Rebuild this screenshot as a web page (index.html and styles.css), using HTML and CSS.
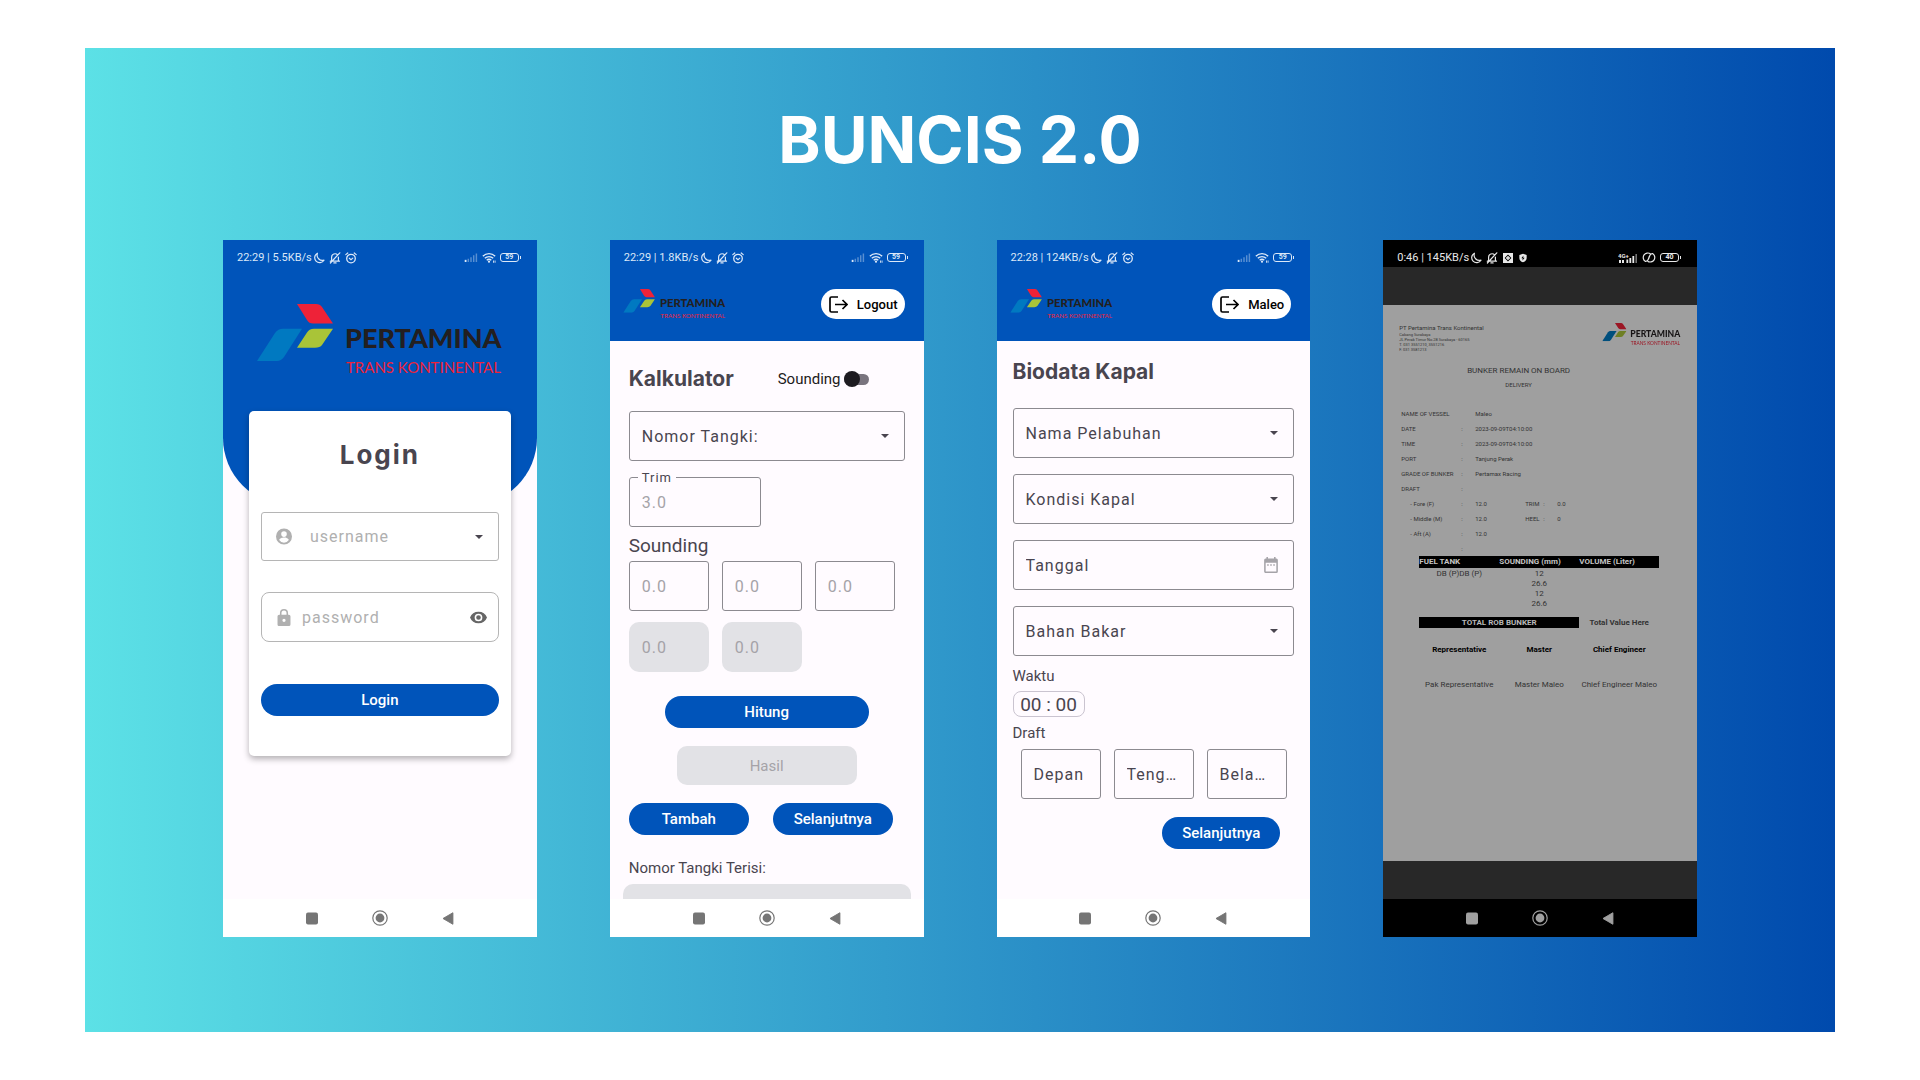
FILE: index.html
```html
<!DOCTYPE html>
<html lang="id">
<head>
<meta charset="utf-8">
<meta name="viewport" content="width=device-width, initial-scale=1">
<title>BUNCIS 2.0</title>
<link rel="stylesheet" href="styles.css">
</head>
<body>
<svg class="sprite" aria-hidden="true">
  <symbol id="moon" viewBox="0 0 12 12"><path d="M4.400 1.200A5 5 0 1 0 11 8.200 5.400 5.400 0 0 1 4.400 1.200Z" fill="none" stroke="currentColor" stroke-width="1.200" stroke-linejoin="round"/></symbol>
  <symbol id="bell-off" viewBox="0 0 12 12"><path d="M1.3 9.2h9.2M2.6 9V5.2A3.4 3.4 0 0 1 8.6 3M9.4 5v4M4.9 10.9h2.2M10.8.8 1.4 11" fill="none" stroke="currentColor" stroke-width="1.2" stroke-linecap="round"/></symbol>
  <symbol id="alarm" viewBox="0 0 12 12"><circle cx="6" cy="6.6" r="4.3" fill="none" stroke="currentColor" stroke-width="1.3"/><path d="M4.3 6.2 6 7.6l1.8-1.5M.8 2.6 2.8 1M11.2 2.6 9.2 1" fill="none" stroke="currentColor" stroke-width="1.2" stroke-linecap="round"/></symbol>
  <symbol id="signal" viewBox="0 0 14 10"><path d="M0 7.6h2V10H0z" fill="currentColor"/><path d="M3.2 6.4h1.6V10H3.2zM6.2 4.6h1.6V10H6.2zM9.2 2.6h1.6V10H9.2zM12.2.6h1.6V10h-1.6z" fill="currentColor" opacity=".4"/></symbol>
  <symbol id="wifi" viewBox="0 0 14 11"><path d="M.9 4.2a8.6 8.6 0 0 1 12.2 0M2.8 6.3a6 6 0 0 1 8.4 0M4.7 8.3a3.3 3.3 0 0 1 4.6 0" fill="none" stroke="currentColor" stroke-width="1.4"/><circle cx="7" cy="9.7" r="1.1" fill="currentColor"/><path d="M11 8.4h.9v2.4H11zM12.6 8.4h.9v2.4h-.9z" fill="currentColor"/></symbol>
  <symbol id="link" viewBox="0 0 14 11"><path d="M8.400 1.800A4.300 4.300 0 1 0 3.200 9.300C5 9.600 6 8.400 6.400 7L7.400 4.200M5.600 9.200A4.300 4.300 0 1 0 10.800 1.700C9 1.400 8 2.600 7.600 4L6.600 6.800" fill="none" stroke="currentColor" stroke-width="1.200"/></symbol>
  <symbol id="diamond" viewBox="0 0 12 12"><path fill-rule="evenodd" d="M1 1h10v10H1zM6 2.600 2.600 6 6 9.400 9.400 6Z" fill="currentColor"/><path d="M6 4v4M4 6h4" stroke="currentColor" stroke-width="1.400"/></symbol>
  <symbol id="shield" viewBox="0 0 10 12"><path fill-rule="evenodd" d="M5 .8 9.400 2.300V6c0 2.600-1.800 4.300-4.400 5.200C2.400 10.300.6 8.600.6 6V2.300ZM5.600 3 3 6.400h1.700L4.300 9 7 5.600H5.200Z" fill="currentColor"/></symbol>
  <symbol id="caret" viewBox="0 0 8 4"><path d="M0 0h8L4 4z" fill="currentColor"/></symbol>
  <symbol id="user" viewBox="2 2 20 20"><path d="M12 2a10 10 0 1 0 0 20 10 10 0 0 0 0-20zm0 3.500a3.500 3.500 0 1 1 0 7 3.500 3.500 0 0 1 0-7zm0 14.200a7.200 7.200 0 0 1-6-3.220c.03-1.990 4-3.080 6-3.080s5.970 1.090 6 3.080a7.200 7.200 0 0 1-6 3.220z" fill="currentColor"/></symbol>
  <symbol id="lock" viewBox="4 1 16 21"><path d="M18 8h-1V6A5 5 0 0 0 7 6v2H6a2 2 0 0 0-2 2v10c0 1.100.9 2 2 2h12a2 2 0 0 0 2-2V10a2 2 0 0 0-2-2zm-6 9a2 2 0 1 1 0-4 2 2 0 0 1 0 4zm3.100-9H8.900V6a3.100 3.100 0 0 1 6.200 0z" fill="currentColor"/></symbol>
  <symbol id="eye" viewBox="1 4 22 16"><path d="M12 4.500A11.800 11.800 0 0 0 1 12a11.800 11.800 0 0 0 22 0A11.800 11.800 0 0 0 12 4.500zM12 17a5 5 0 1 1 0-10 5 5 0 0 1 0 10zm0-8a3 3 0 1 0 0 6 3 3 0 0 0 0-6z" fill="currentColor"/></symbol>
  <symbol id="exit" viewBox="0 0 19 17"><path d="M9 1H2.500A1.500 1.500 0 0 0 1 2.500v12A1.500 1.500 0 0 0 2.500 16H9M6 8.500h12M13.500 4l4.500 4.500-4.500 4.500" fill="none" stroke="currentColor" stroke-width="1.700"/></symbol>
  <symbol id="calendar" viewBox="3 1 18 21"><path d="M19 3h-1V1h-2v2H8V1H6v2H5a2 2 0 0 0-2 2v15c0 1.100.9 2 2 2h14a2 2 0 0 0 2-2V5a2 2 0 0 0-2-2zm0 17H5V8.500h14zM7 10.500h2v2H7zm4 0h2v2h-2zm4 0h2v2h-2z" fill="currentColor"/></symbol>
  <symbol id="nav-square" viewBox="0 0 12 12"><rect width="12" height="12" rx="2" fill="currentColor"/></symbol>
  <symbol id="nav-home" viewBox="0 0 16 16"><circle cx="8" cy="8" r="7.200" fill="none" stroke="currentColor" stroke-width="1.200"/><circle cx="8" cy="8" r="4.400" fill="currentColor"/></symbol>
  <symbol id="nav-back" viewBox="0 0 12 14"><path d="M11.300.8v12.400L.6 7z" fill="currentColor" stroke="currentColor" stroke-linejoin="round"/></symbol>
  <symbol id="mark" viewBox="0 0 76 57"><path d="M40 0H59Q63 0 65 3L76 19.500H56Q52 19.500 50 16Z" fill="#ee2238"/><path d="M0 57 18 29Q21 24.700 26 24.700H45L27 53Q24 57 20 57Z" fill="#0079c1"/><path d="M40 43.700 50 28.500Q52 24.700 57 24.700H76L65 41Q63 43.700 58 43.700Z" fill="#a9c438"/></symbol>
</svg>

<main class="stage">
  <div class="panel">
    <h1 class="headline">BUNCIS 2.0</h1>
    <div class="phones">

      <section class="phone" aria-label="Login">
        <header class="hero">
          <div class="status">
            <span>22:29 | 5.5KB/s</span>
            <svg class="ico-12"><use href="#moon"/></svg><svg class="ico-12"><use href="#bell-off"/></svg><svg class="ico-12"><use href="#alarm"/></svg>
            <span class="spacer"></span>
            <svg class="ico-signal"><use href="#signal"/></svg><svg class="ico-wifi"><use href="#wifi"/></svg><span class="battery">59</span>
          </div>
          <svg class="logo logo-large" viewBox="0 0 246 72" role="img" aria-label="Pertamina Trans Kontinental">
            <use href="#mark" width="76" height="57"/>
            <text class="logo-name" x="88" y="44">PERTAMINA</text>
            <text class="logo-unit" x="89" y="69">TRANS KONTINENTAL</text>
          </svg>
        </header>
        <form class="card">
          <h2 class="card-title">Login</h2>
          <div class="entry entry-user">
            <svg class="entry-icon"><use href="#user"/></svg>
            <select aria-label="username"><option>username</option></select>
            <svg class="caret"><use href="#caret"/></svg>
          </div>
          <div class="entry entry-pass">
            <svg class="entry-icon"><use href="#lock"/></svg>
            <input type="password" placeholder="password" aria-label="password">
            <svg class="eye"><use href="#eye"/></svg>
          </div>
          <button class="btn" type="button">Login</button>
        </form>
        <nav class="navbar"><svg class="nav-side"><use href="#nav-square"/></svg><svg class="nav-mid"><use href="#nav-home"/></svg><svg class="nav-side"><use href="#nav-back"/></svg></nav>
      </section>

      <section class="phone" aria-label="Kalkulator">
        <header class="appbar">
          <div class="status">
            <span>22:29 | 1.8KB/s</span>
            <svg class="ico-12"><use href="#moon"/></svg><svg class="ico-12"><use href="#bell-off"/></svg><svg class="ico-12"><use href="#alarm"/></svg>
            <span class="spacer"></span>
            <svg class="ico-signal"><use href="#signal"/></svg><svg class="ico-wifi"><use href="#wifi"/></svg><span class="battery">59</span>
          </div>
          <div class="appbar-row">
            <svg class="logo logo-small" viewBox="0 0 246 72" role="img" aria-label="Pertamina Trans Kontinental">
              <use href="#mark" width="76" height="57"/>
              <text class="logo-name" x="88" y="44">PERTAMINA</text>
              <text class="logo-unit" x="89" y="69">TRANS KONTINENTAL</text>
            </svg>
            <button class="pill" type="button"><svg><use href="#exit"/></svg>Logout</button>
          </div>
        </header>
        <form class="calc">
          <div class="calc-head">
            <h2 class="title">Kalkulator</h2>
            <label class="toggle">Sounding<input type="checkbox" role="switch"></label>
          </div>
          <div class="field">
            <select aria-label="Nomor Tangki"><option>Nomor Tangki:</option></select>
            <svg class="caret"><use href="#caret"/></svg>
          </div>
          <div class="field trim">
            <label for="trim">Trim</label>
            <input id="trim" type="text" placeholder="3.0">
          </div>
          <h3 class="subtitle">Sounding</h3>
          <div class="triple">
            <input class="field" type="text" placeholder="0.0" aria-label="Sounding 1">
            <input class="field" type="text" placeholder="0.0" aria-label="Sounding 2">
            <input class="field" type="text" placeholder="0.0" aria-label="Sounding 3">
            <input class="field" type="text" placeholder="0.0" aria-label="Rata-rata 1" disabled>
            <input class="field" type="text" placeholder="0.0" aria-label="Rata-rata 2" disabled>
          </div>
          <button class="btn btn-count" type="button">Hitung</button>
          <input class="result" type="text" placeholder="Hasil" aria-label="Hasil" disabled>
          <div class="pair">
            <button class="btn" type="button">Tambah</button>
            <button class="btn" type="button">Selanjutnya</button>
          </div>
          <p class="caption">Nomor Tangki Terisi:</p>
          <div class="filled"></div>
        </form>
        <nav class="navbar"><svg class="nav-side"><use href="#nav-square"/></svg><svg class="nav-mid"><use href="#nav-home"/></svg><svg class="nav-side"><use href="#nav-back"/></svg></nav>
      </section>

      <section class="phone" aria-label="Biodata Kapal">
        <header class="appbar">
          <div class="status">
            <span>22:28 | 124KB/s</span>
            <svg class="ico-12"><use href="#moon"/></svg><svg class="ico-12"><use href="#bell-off"/></svg><svg class="ico-12"><use href="#alarm"/></svg>
            <span class="spacer"></span>
            <svg class="ico-signal"><use href="#signal"/></svg><svg class="ico-wifi"><use href="#wifi"/></svg><span class="battery">59</span>
          </div>
          <div class="appbar-row">
            <svg class="logo logo-small" viewBox="0 0 246 72" role="img" aria-label="Pertamina Trans Kontinental">
              <use href="#mark" width="76" height="57"/>
              <text class="logo-name" x="88" y="44">PERTAMINA</text>
              <text class="logo-unit" x="89" y="69">TRANS KONTINENTAL</text>
            </svg>
            <button class="pill" type="button"><svg><use href="#exit"/></svg>Maleo</button>
          </div>
        </header>
        <form class="bio">
          <h2 class="title">Biodata Kapal</h2>
          <div class="stack">
            <div class="field"><select aria-label="Nama Pelabuhan"><option>Nama Pelabuhan</option></select><svg class="caret"><use href="#caret"/></svg></div>
            <div class="field"><select aria-label="Kondisi Kapal"><option>Kondisi Kapal</option></select><svg class="caret"><use href="#caret"/></svg></div>
            <div class="field"><input type="text" placeholder="Tanggal" aria-label="Tanggal"><svg class="calendar"><use href="#calendar"/></svg></div>
            <div class="field"><select aria-label="Bahan Bakar"><option>Bahan Bakar</option></select><svg class="caret"><use href="#caret"/></svg></div>
          </div>
          <label class="caption" for="time">Waktu</label>
          <input class="time" id="time" type="text" value="00 : 00">
          <p class="caption">Draft</p>
          <div class="triple triple-draft">
            <input class="field" type="text" placeholder="Depan" aria-label="Draft depan">
            <input class="field" type="text" placeholder="Teng…" aria-label="Draft tengah">
            <input class="field" type="text" placeholder="Bela…" aria-label="Draft belakang">
          </div>
          <button class="btn btn-next" type="button">Selanjutnya</button>
        </form>
        <nav class="navbar"><svg class="nav-side"><use href="#nav-square"/></svg><svg class="nav-mid"><use href="#nav-home"/></svg><svg class="nav-side"><use href="#nav-back"/></svg></nav>
      </section>

      <section class="phone phone-dark" aria-label="Bunker Remain On Board">
        <div class="status">
          <span>0:46 | 145KB/s</span>
          <svg class="ico-12"><use href="#moon"/></svg><svg class="ico-12"><use href="#bell-off"/></svg><svg class="ico-12"><use href="#diamond"/></svg><svg class="ico-shield"><use href="#shield"/></svg>
          <span class="spacer"></span>
          <svg class="ico-4g" viewBox="0 0 20 12"><text x="0" y="6" font-size="6" font-weight="700" fill="currentColor">4G+</text><path d="M1 8h2v3H1zM4 8h2v3H4zM8.400 7.400h1.800V11H8.400zM11.400 6h1.800v5h-1.800zM14.400 4h1.800v7h-1.800z" fill="currentColor"/><path d="M17.400 2H19v9h-1.600z" fill="currentColor" opacity=".5"/></svg>
          <svg class="ico-wifi"><use href="#link"/></svg><span class="battery">40</span>
        </div>
        <article class="doc">
          <header class="doc-head">
            <div>
              <p class="company">PT Pertamina Trans Kontinental</p>
              <address class="address">Cabang Surabaya<br>JL Perak Timur No.28 Surabaya - 60165<br>T. 031 3551210, 3551216<br>F. 031 3581213</address>
            </div>
            <svg class="logo logo-doc" viewBox="0 0 246 72" role="img" aria-label="Pertamina Trans Kontinental">
              <use href="#mark" width="76" height="57"/>
              <text class="logo-name" x="88" y="44">PERTAMINA</text>
              <text class="logo-unit" x="89" y="69">TRANS KONTINENTAL</text>
            </svg>
          </header>
          <div class="doc-title">
            <h2>BUNKER REMAIN ON BOARD</h2>
            <p>DELIVERY</p>
          </div>
          <table class="info">
            <colgroup><col class="c-label"><col class="c-colon"><col class="c-value"><col class="c-trim"><col class="c-colon"><col></colgroup>
            <tr><th>NAME OF VESSEL</th><td></td><td colspan="4">Maleo</td></tr>
            <tr><th>DATE</th><td>:</td><td colspan="4">2023-09-09T04:10:00</td></tr>
            <tr><th>TIME</th><td>:</td><td colspan="4">2023-09-09T04:10:00</td></tr>
            <tr><th>PORT</th><td>:</td><td colspan="4">Tanjung Perak</td></tr>
            <tr><th>GRADE OF BUNKER</th><td>:</td><td colspan="4">Pertamax Racing</td></tr>
            <tr><th>DRAFT</th><td>:</td><td colspan="4"></td></tr>
            <tr><th class="sub">- Fore (F)</th><td>:</td><td>12.0</td><td>TRIM</td><td>:</td><td>0.0</td></tr>
            <tr><th class="sub">- Middle (M)</th><td>:</td><td>12.0</td><td>HEEL</td><td>:</td><td>0</td></tr>
            <tr><th class="sub">- Aft (A)</th><td>:</td><td>12.0</td><td></td><td></td><td></td></tr>
            <tr><th></th><td>:</td><td></td><td></td><td></td><td></td></tr>
          </table>
          <table class="fuel">
            <thead><tr><th>FUEL TANK</th><th>SOUNDING (mm)</th><th>VOLUME (Liter)</th></tr></thead>
            <tbody>
              <tr class="fuel-row"><td>DB (P)DB (P)</td><td>12<br>26.6<br>12<br>26.6</td><td></td></tr>
              <tr class="fuel-total"><th colspan="2">TOTAL ROB BUNKER</th><td>Total Value Here</td></tr>
              <tr class="fuel-roles"><th>Representative</th><th>Master</th><th>Chief Engineer</th></tr>
              <tr><td>Pak Representative</td><td>Master Maleo</td><td>Chief Engineer Maleo</td></tr>
            </tbody>
          </table>
        </article>
        <nav class="navbar"><svg class="nav-side"><use href="#nav-square"/></svg><svg class="nav-mid"><use href="#nav-home"/></svg><svg class="nav-side"><use href="#nav-back"/></svg></nav>
      </section>

    </div>
  </div>
</main>
</body>
</html>
```
FILE: styles.css
```css
*, *::before { box-sizing: border-box; }
h1, h2, h3, p { margin: 0; }
body { margin: 0; background: #fff; color: #49454f; font-family: Roboto, "Liberation Sans", sans-serif; }
button, input, select { font: inherit; letter-spacing: inherit; color: inherit; margin: 0; padding: 0; border: 0; background: none; min-width: 0; }
select { appearance: none; flex: 1; }
svg { display: block; flex: none; }
.sprite { position: absolute; width: 0; height: 0; }

.stage { padding: 48px 85px; }
.panel { min-height: calc(100vh - 96px); padding: 52px 138px 94px; background: linear-gradient(90deg, #5ce1e6, #004aad); }
.headline { margin-bottom: 60px; color: #fff; font: 700 64px/80px Inter, sans-serif; text-align: center; }
.phones { display: grid; grid-template-columns: repeat(4, minmax(0, 1fr)); gap: 73px; }
.phone { display: flex; flex-direction: column; aspect-ratio: 9 / 20; background: #fffbff; }

/* Status bar */
.status { display: flex; align-items: center; gap: 4px; padding: 9px 18px 1px 14px; color: #dbe8f8; font-size: 11px; line-height: 17px; white-space: nowrap; }
.status > span:first-child { margin-right: -3px; }
.spacer { flex: 1; }
.ico-12 { width: 12px; height: 12px; }
.ico-shield { width: 10px; height: 10px; }
.ico-signal { width: 14px; height: 9px; }
.ico-4g { width: 20px; height: 12px; }
.ico-wifi { width: 14px; height: 11px; }
.battery { position: relative; width: 19px; height: 9px; border: 1px solid; border-radius: 3px; font-size: 7px; font-weight: 700; line-height: 7px; text-align: center; }
.battery::after { content: ""; position: absolute; top: 2px; right: -3px; width: 1px; height: 3px; background: currentColor; }

/* Logo */
.logo { overflow: visible; }
.logo-large { width: 246px; height: 72px; }
.logo-small { width: 103px; height: 30px; }
.logo-doc { width: 79px; height: 23px; filter: brightness(.65); }
.logo-name { font: 900 27px Lato, sans-serif; fill: #231f20; }
.logo-unit { font: 400 15px Lato, sans-serif; fill: #ee2238; }

/* Login */
.hero { display: flex; flex-direction: column; height: 265px; border-radius: 0 0 67px 67px; background: #0054ba; }
.hero .logo { align-self: center; margin-top: 37px; }
.card { display: flex; flex-direction: column; margin: -94px 26px 0; padding: 26px 12px 40px; border-radius: 5px; background: #fff; box-shadow: 0 3px 6px rgba(0, 0, 0, .3); }
.card-title { margin-bottom: 39px; font: 700 26px/36px Inter, sans-serif; letter-spacing: 2px; text-align: center; }
.entry { display: flex; align-items: center; padding: 0 11px 0 14px; border: 1px solid #b5b5b5; color: #b0b0b0; font-size: 16px; letter-spacing: 1px; }
.entry input { flex: 1; }
.entry input::placeholder { color: #b0b0b0; }
.entry-user { gap: 18px; height: 49px; margin-bottom: 31px; padding-right: 15px; border-radius: 3px; }
.entry-pass { gap: 10px; height: 50px; margin-bottom: 42px; border-radius: 8px; }
.entry-icon { width: 16px; height: 17px; }
.caret { width: 8px; height: 4px; color: #49454f; }
.eye { width: 17px; height: 13px; color: #666; }

.btn { height: 32px; border-radius: 16px; background: #0054ba; color: #fff; font-size: 15px; font-weight: 500; }

/* App bar */
.appbar { height: 101px; background: #0054ba; }
.appbar-row { display: flex; align-items: center; justify-content: space-between; margin-top: 22px; padding: 0 19px 0 13px; }
.pill { display: flex; align-items: center; gap: 9px; height: 30px; padding: 0 7px 0 8px; border-radius: 15px; background: #fff; color: #000; font-size: 13px; font-weight: 500; }
.pill svg { width: 19px; height: 17px; }

/* Shared form parts */
.title { font: 700 21px/30px Inter, sans-serif; }
.field { display: flex; align-items: center; height: 50px; padding: 0 15px 0 12px; border: 1px solid #8c8a90; border-radius: 3px; font-size: 16px; letter-spacing: 1px; }
.field input { flex: 1; }
.bio ::placeholder { color: #49454f; opacity: 1; }
.calc ::placeholder { color: #a5a3a8; opacity: 1; }
.triple { display: grid; grid-template-columns: repeat(3, 80px); gap: 11px 13px; }
.triple .field { width: 80px; padding-right: 4px; }
.triple .field:disabled { border: 0; padding-left: 13px; border-radius: 10px; background: #e2e2e6; }
.caption { font-size: 15px; line-height: 20px; }

/* Kalkulator */
.calc { display: flex; flex: 1; flex-direction: column; padding: 23px 19px 0; }
.calc-head { display: flex; align-items: center; justify-content: space-between; margin-bottom: 17px; padding-right: 36px; }
.toggle { display: flex; align-items: center; gap: 3px; color: #1d1b20; font-size: 15px; }
.toggle input { position: relative; appearance: none; width: 25px; height: 11px; border-radius: 6px; background: #79747e; }
.toggle input::before { content: ""; position: absolute; top: -3px; left: 0; width: 16px; height: 16px; border-radius: 50%; background: #1d1b20; }
.trim { position: relative; width: 132px; margin-top: 16px; }
.trim label { position: absolute; top: -8px; left: 8px; padding: 0 4px; background: #fffbff; font-size: 13px; line-height: 16px; }
.subtitle { margin: 7px 0 3px; font-size: 19px; font-weight: 400; line-height: 24px; }
.btn-count { align-self: center; width: 204px; margin: 24px 0 18px; }
.result { align-self: center; width: 180px; height: 39px; border-radius: 10px; background: #e2e2e6; font-size: 15px; text-align: center; }
.pair { display: grid; grid-template-columns: 120px 120px; gap: 24px; margin: 18px 0 23px; }
.filled { flex: 1; min-height: 15px; margin: 6px -6px 0; border-radius: 10px 10px 0 0; background: #e2e2e6; }

/* Biodata */
.bio { display: flex; flex: 1; flex-direction: column; align-items: flex-start; padding: 16px 16px 0; }
.stack { display: grid; gap: 16px; width: 100%; margin: 21px 0 10px; }
.calendar { width: 14px; height: 16px; color: #a5a3a8; }
.time { width: 72px; height: 26px; margin: 5px 0 6px; border: 1px solid #cac4d0; border-radius: 8px; font-size: 19px; text-align: center; }
.triple-draft { margin: 6px 0 18px 8px; }
.btn-next { align-self: flex-end; width: 118px; margin-right: 14px; }

/* Navigation bar */
.navbar { display: flex; align-items: center; justify-content: center; gap: 54px; height: 38px; margin-top: auto; background: #fff; color: #757575; }
.nav-side { width: 12px; height: 13px; }
.nav-mid { width: 16px; height: 16px; }

/* Document preview */
.phone-dark { background: #282828; }
.phone-dark .status { background: #000; color: #e8e8e8; }
.phone-dark .navbar { margin-top: 38px; background: #000; color: #a0a0a0; }
.doc { flex: 1; margin-top: 38px; padding: 18px 16px 0; background: #9f9f9f; color: #333; font-size: 6px; }
.doc-head { display: flex; justify-content: space-between; }
.company { line-height: 9px; }
.address { font-size: 4px; font-style: normal; line-height: 5px; }
.doc-title { margin: 13px -16px 15px; padding-right: 43px; line-height: 12px; text-align: center; }
.doc-title h2 { margin-bottom: 2px; font-size: 8px; font-weight: 400; }
table { border-collapse: collapse; table-layout: fixed; }
th, td { padding: 0; }
.info { width: calc(100% - 2px); margin-left: 2px; }
.info th, .info td { height: 15px; font-weight: 400; text-align: left; white-space: nowrap; }
.info .sub { padding-left: 9px; }
.c-label { width: 60px; }
.c-colon { width: 14px; }
.c-value { width: 50px; }
.c-trim { width: 18px; }
.fuel { width: 240px; margin-left: 20px; font-size: 8px; line-height: 10px; text-align: center; white-space: nowrap; }
.fuel thead th { height: 12px; background: #000; color: #c4c4c4; text-align: left; }
.fuel-row td { padding: 1px 0 8px; vertical-align: top; }
.fuel-total th { height: 11px; background: #000; color: #b8b8b8; }
.fuel-total td { font-weight: 700; }
.fuel-roles th { height: 44px; color: #000; }
.fuel tr:last-child td { height: 26px; }
```
